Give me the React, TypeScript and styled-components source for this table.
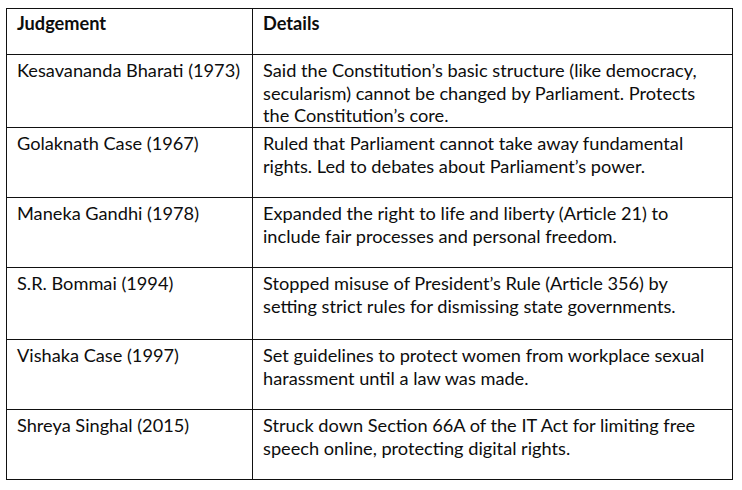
import React from 'react'
import styled, { createGlobalStyle } from 'styled-components'

const GlobalStyle = createGlobalStyle`
    html, body {
        margin : 0;
        padding : 0;
        background : #ffffff;
    }
    body {
        font-family : Lato, "Open Sans", "Liberation Sans", sans-serif;
        color : #0d0d0d;
    }
`

interface Judgement {
    name: string
    details: string[]
    height: number
}

const judgements: Judgement[] = [
    {
        name: 'Kesavananda Bharati (1973)',
        details: [
            'Said the Constitution’s basic structure (like democracy,',
            'secularism) cannot be changed by Parliament. Protects',
            'the Constitution’s core.',
        ],
        height: 73,
    },
    {
        name: 'Golaknath Case (1967)',
        details: [
            'Ruled that Parliament cannot take away fundamental',
            'rights. Led to debates about Parliament’s power.',
        ],
        height: 70,
    },
    {
        name: 'Maneka Gandhi (1978)',
        details: [
            'Expanded the right to life and liberty (Article 21) to',
            'include fair processes and personal freedom.',
        ],
        height: 70,
    },
    {
        name: 'S.R. Bommai (1994)',
        details: [
            'Stopped misuse of President’s Rule (Article 356) by',
            'setting strict rules for dismissing state governments.',
        ],
        height: 72,
    },
    {
        name: 'Vishaka Case (1997)',
        details: [
            'Set guidelines to protect women from workplace sexual',
            'harassment until a law was made.',
        ],
        height: 70,
    },
    {
        name: 'Shreya Singhal (2015)',
        details: [
            'Struck down Section 66A of the IT Act for limiting free',
            'speech online, protecting digital rights.',
        ],
        height: 70,
    },
]

const App = () => {
    return (
        <>
            <GlobalStyle />
            <Page>
                <Table>
                    <colgroup>
                        <col style={{ width: 246 }} />
                        <col />
                    </colgroup>
                    <thead>
                        <Row $height={46}>
                            <HeadCell>Judgement</HeadCell>
                            <HeadCell>Details</HeadCell>
                        </Row>
                    </thead>
                    <tbody>
                        {judgements.map((j) => (
                            <Row key={j.name} $height={j.height}>
                                <Cell>{j.name}</Cell>
                                <Cell>
                                    {j.details.map((line) => (
                                        <Line key={line}>{line}</Line>
                                    ))}
                                </Cell>
                            </Row>
                        ))}
                    </tbody>
                </Table>
            </Page>
        </>
    )
}

const Page = styled.div`
    padding : 8px 8px 0 6px;
    width : 742px;
    box-sizing : border-box;
`

const Table = styled.table`
    width : 727px;
    table-layout : fixed;
    border-collapse : collapse;
    font-size : 18.2px;
    line-height : 22.6px;
`

const Row = styled.tr<{ $height: number }>`
    height : ${(props) => props.$height}px;
`

const HeadCell = styled.th`
    border : 1px solid #111111;
    padding : 3px 10px 0 10px;
    vertical-align : top;
    text-align : left;
    font-weight : bold;
`

const Cell = styled.td`
    border : 1px solid #111111;
    padding : 4px 10px 0 10px;
    vertical-align : top;
    white-space : nowrap;
`

const Line = styled.div`
    white-space : nowrap;
`

export default App
